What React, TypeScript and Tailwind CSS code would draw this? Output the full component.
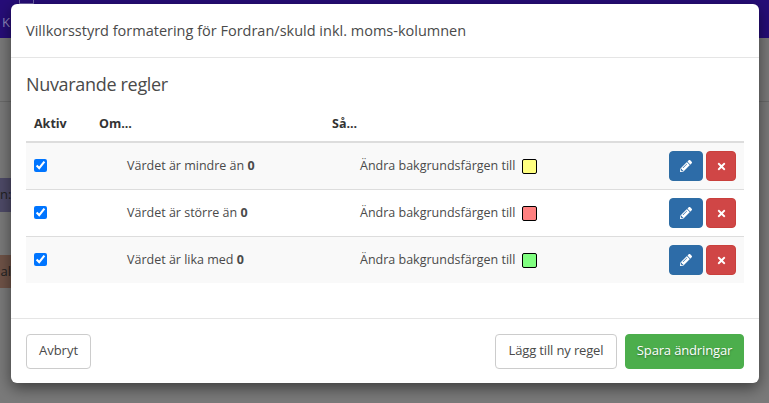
import { FaPencilAlt, FaTimes } from "react-icons/fa";

const rules = [
  { text: "Värdet är mindre än", color: "bg-[#ffff80]", bg: "bg-[#f9f9f9]", row: "h-[47px] border-b border-[#dddddd]" },
  { text: "Värdet är större än", color: "bg-[#ff8080]", bg: "bg-white", row: "h-[47px] border-b border-[#dddddd]" },
  { text: "Värdet är lika med", color: "bg-[#80ff80]", bg: "bg-[#f9f9f9]", row: "h-[46px]" },
];

export default function App() {
  return (
    <div className="relative h-[403px] w-[769px] overflow-hidden bg-[#7a7a7a] font-['Open_Sans',sans-serif] text-[#4a4a4a]">
      <div className="flex h-[38px] items-end bg-[#260d78]">
        <span className="pb-[6px] pl-[2px] text-[13px] text-[#8f86bd]">K</span>
      </div>
      <div className="absolute left-[19px] top-0 h-[4px] w-[15px] border-x border-b border-[#6f63a8]" />
      <div className="mt-[63px] h-px bg-[#6a6a6a]" />
      <div className="mt-[76px] flex h-[34px] w-[11px] items-center whitespace-nowrap bg-[#4e4a68] text-[13px] text-[#222222]">n: 1</div>
      <div className="mt-[43px] flex h-[33px] w-[11px] items-center justify-end bg-[#6f5347] text-[13px] text-[#222222]">al</div>

      <div className="absolute left-[11px] top-[4px] flex h-[379px] w-[748px] flex-col rounded-[6px] bg-white shadow-[0_5px_15px_rgba(0,0,0,0.5)]">
        <div className="flex h-[54px] shrink-0 items-center border-b border-[#e5e5e5] px-[15px]">
          <h4 className="text-[14.5px]">Villkorsstyrd formatering för Fordran/skuld inkl. moms-kolumnen</h4>
        </div>
        <div className="flex-1 px-[15px]">
          <h3 className="mt-[13px] text-[18px] leading-[26px] tracking-[-0.32px]">Nuvarande regler</h3>
          <div className="mt-[19px] flex h-[27px] items-center border-b-2 border-[#dddddd] pb-[9px] text-[12.5px] font-bold text-[#333333]">
            <span className="w-[73px] pl-[8px]">Aktiv</span>
            <span className="w-[233px]">Om...</span>
            <span>Så...</span>
          </div>
          {rules.map((r) => (
            <div key={r.text} className={`flex items-center ${r.row} ${r.bg}`}>
              <div className="mb-[2px] flex w-[101px] pl-[8px]">
                <input type="checkbox" defaultChecked className="h-[13px] w-[13px] accent-[#0075ff]" />
              </div>
              <div className="w-[233px] text-[12.5px]">
                {r.text} <b className="font-bold">0</b>
              </div>
              <div className="flex flex-1 items-center text-[12.5px]">
                Ändra bakgrundsfärgen till
                <span className={`ml-[7px] h-[15px] w-[15px] rounded-[2px] border border-black ${r.color}`} />
              </div>
              <div className="flex gap-[3px] pr-[8px]">
                <button className="flex h-[30px] w-[34px] items-center justify-center rounded-[4px] border border-[#2e6da4] bg-[#2d6ca8] text-white">
                  <FaPencilAlt className="h-[12px] w-[12px]" />
                </button>
                <button className="flex h-[30px] w-[30px] items-center justify-center rounded-[4px] border border-[#c9403c] bg-[#d04646] text-white">
                  <FaTimes className="h-[11px] w-[11px]" />
                </button>
              </div>
            </div>
          ))}
        </div>
        <div className="flex h-[65px] shrink-0 items-center justify-between border-t border-[#e5e5e5] px-[15px]">
          <button className="h-[35px] w-[65px] rounded-[4px] border border-[#cccccc] bg-white text-[13px] text-[#4a4a4a]">Avbryt</button>
          <div className="flex gap-[8px]">
            <button className="h-[35px] w-[122px] rounded-[4px] border border-[#cccccc] bg-white text-[13px] tracking-[-0.15px] text-[#4a4a4a]">Lägg till ny regel</button>
            <button className="h-[35px] w-[119px] rounded-[4px] border border-[#4cae4c] bg-[#4cae4c] text-[13px] tracking-[-0.15px] text-white [text-shadow:0_1px_2px_rgba(0,0,0,0.35)]">Spara ändringar</button>
          </div>
        </div>
      </div>
    </div>
  );
}
